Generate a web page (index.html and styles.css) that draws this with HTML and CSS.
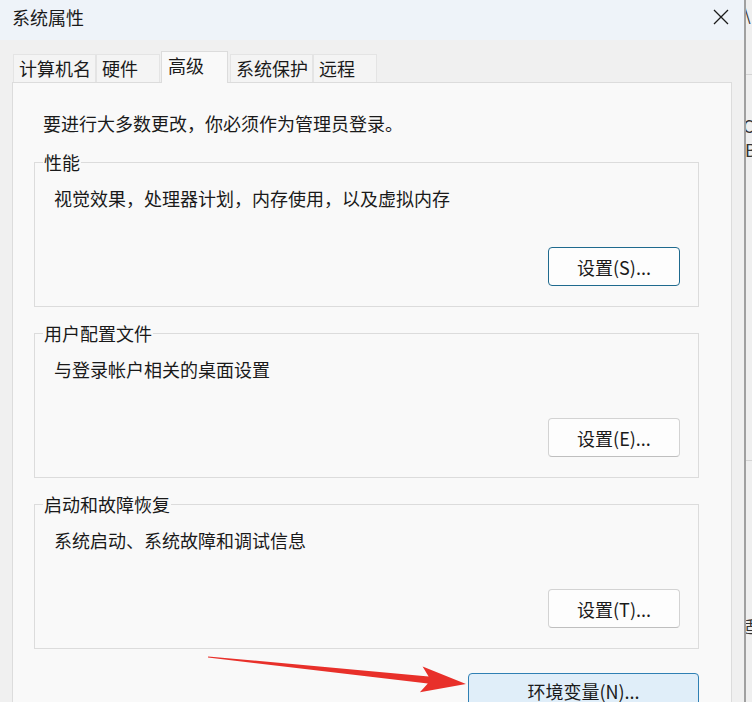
FILE: index.html
```html
<!DOCTYPE html>
<html lang="zh-CN">
<head>
<meta charset="utf-8">
<title>系统属性</title>
<link rel="stylesheet" href="styles.css">
</head>
<body>
<div class="screen">
  <div class="dialog">
    <div class="titlebar">
      <span class="title">系统属性</span>
      <svg class="close" width="16" height="16" viewBox="0 0 16 16"><path d="M1 1 L15 15 M15 1 L1 15" stroke="#1b1b1b" stroke-width="1.3" fill="none"/></svg>
    </div>
    <div class="tabs">
      <div class="tab">计算机名</div>
      <div class="tab">硬件</div>
      <div class="tab tab-active">高级</div>
      <div class="tab">系统保护</div>
      <div class="tab">远程</div>
    </div>
    <div class="panel">
      <p class="intro">要进行大多数更改，你必须作为管理员登录。</p>
      <fieldset class="group">
        <legend>性能</legend>
        <div class="group-body">
          <p class="desc">视觉效果，处理器计划，内存使用，以及虚拟内存</p>
          <div class="actions"><button class="btn btn-focus">设置(S)...</button></div>
        </div>
      </fieldset>
      <fieldset class="group">
        <legend>用户配置文件</legend>
        <div class="group-body">
          <p class="desc">与登录帐户相关的桌面设置</p>
          <div class="actions"><button class="btn">设置(E)...</button></div>
        </div>
      </fieldset>
      <fieldset class="group">
        <legend>启动和故障恢复</legend>
        <div class="group-body">
          <p class="desc">系统启动、系统故障和调试信息</p>
          <div class="actions"><button class="btn">设置(T)...</button></div>
        </div>
      </fieldset>
      <div class="env-row"><button class="btn btn-env">环境变量(N)...</button></div>
    </div>
    <svg class="arrow" width="280" height="50" viewBox="0 0 280 50">
      <polygon points="8.1,6.4 228.6,26.5 222.6,16.4 266,34 219.9,42.2 227.8,33.5 7.9,7.6" fill="#e8302a"/>
    </svg>
  </div>
  <div class="behind">
    <div class="bh-top">\</div>
    <div class="bh-line"></div>
    <div class="bh-c">C</div>
    <div class="bh-b">B</div>
    <div class="bh-line2"></div>
    <div class="bh-s">适</div>
  </div>
</div>
</body>
</html>
```

FILE: styles.css
```css
html, body {
  margin: 0;
  padding: 0;
}
body {
  font-family: "Noto Sans CJK SC", "Noto Sans", sans-serif;
  color: #1a1a1a;
  background: #f0f0f0;
}
.screen {
  display: flex;
  width: 752px;
  height: 702px;
  overflow: hidden;
}
.dialog {
  position: relative;
  width: 744px;
  height: 702px;
  flex: none;
  background: #f0f0f0;
  overflow: hidden;
}
.titlebar {
  height: 40px;
  background: #eef3f9;
  display: flex;
  align-items: center;
  justify-content: space-between;
  padding: 0 15px 0 12px;
  box-sizing: border-box;
}
.title {
  font-size: 18px;
  line-height: 24px;
  margin-top: -7px;
}
.close {
  display: block;
  margin-top: -7px;
}
.tabs {
  display: flex;
  align-items: flex-start;
  height: 32px;
  margin-top: 11px;
  margin-bottom: -1px;
  padding-left: 13px;
  position: relative;
  z-index: 1;
}
.tab {
  box-sizing: border-box;
  height: 28px;
  margin-top: 3px;
  min-width: 64px;
  padding: 0 4px 0 5px;
  font-size: 18px;
  line-height: 26px;
  background: #f4f4f4;
  border: 1px solid #e4e4e4;
  border-bottom: 0;
  margin-right: 0;
  white-space: nowrap;
}
.tab-active {
  height: 32px;
  margin-top: 0;
  min-width: 67px;
  padding: 0 6px;
  line-height: 26px;
  background: #f9f9f9;
  border-color: #dcdcdc;
  margin-left: 1px;
  margin-right: 2px;
}
.panel {
  margin: 0 12px;
  height: 700px;
  box-sizing: border-box;
  border: 1px solid #dcdcdc;
  background: #f9f9f9;
  padding: 0 32px 0 21px;
}
.intro {
  margin: 28px 0 15px 9px;
  font-size: 18px;
  line-height: 24px;
}
.group {
  margin: 0 0 14px;
  padding: 0;
  border: 1px solid #dcdcdc;
  min-width: 0;
}
.group legend {
  margin-left: 8px;
  padding: 0 1px;
  font-size: 18px;
  line-height: 24px;
}
.group-body {
  padding: 12px 18px 20px 19px;
}
.desc {
  margin: 0;
  font-size: 18px;
  line-height: 24px;
}
.actions {
  display: flex;
  justify-content: flex-end;
  margin-top: 37px;
}
.btn {
  box-sizing: border-box;
  width: 132px;
  height: 39px;
  font-family: "Noto Sans CJK SC", "Noto Sans", sans-serif;
  font-size: 18px;
  line-height: 24px;
  color: #1a1a1a;
  background: #fdfdfd;
  border: 1px solid #d3d3d3;
  border-bottom-color: #bfbfbf;
  border-radius: 4px;
  padding: 0;
}
.btn-focus {
  border: 1px solid #1f6a8e;
}
.env-row {
  display: flex;
  justify-content: flex-end;
  margin-top: 24px;
}
.btn-env {
  width: 231px;
  height: 35px;
  background: #e0eef9;
  border: 1px solid #2f80b4;
}
.arrow {
  position: absolute;
  left: 200px;
  top: 650px;
}
.behind {
  flex: 1;
  background: #efefef;
  border-left: 2px solid #a0a0a0;
  overflow: hidden;
  white-space: nowrap;
  font-size: 17px;
  line-height: 20px;
  color: #333;
}
.bh-top {
  margin-top: 4px;
  margin-left: -2px;
}
.bh-line {
  height: 1px;
  background: #d4d4d4;
  margin-top: 50px;
}
.bh-c {
  margin-top: 41px;
  margin-left: -3px;
}
.bh-b {
  margin-top: 4px;
  margin-left: -1px;
}
.bh-line2 {
  height: 1px;
  background: #d4d4d4;
  margin-top: 300px;
}
.bh-s {
  margin-top: 155px;
  margin-left: -6px;
}
```
